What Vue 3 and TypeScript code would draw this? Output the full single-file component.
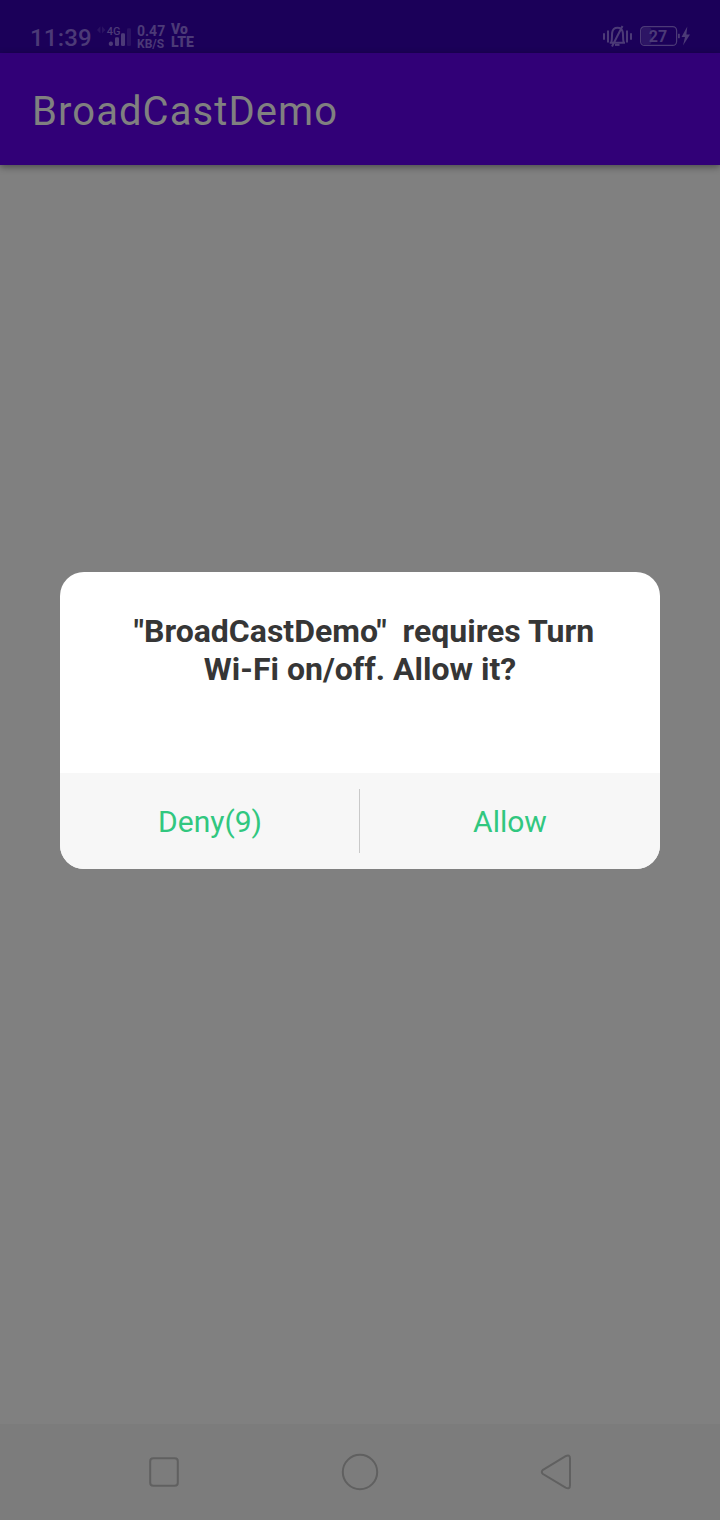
<script setup lang="ts">
const appName = 'BroadCastDemo'
const message = ` "${appName}"  requires Turn\nWi-Fi on/off. Allow it?`
const actions: string[] = ['Deny(9)', 'Allow']
</script>

<template>
  <div class="screen">
    <header class="status">
      <span class="clock">11:39</span>
      <svg class="signal" width="36" height="30" viewBox="0 0 36 30">
        <path d="M3.4 3.2 L0 6.9 L3.4 10.6Z M5 3.2 L8.4 6.9 L5 10.6Z" class="faint" />
        <text x="9.8" y="12" class="gen">4G</text>
        <rect x="11.9" y="18.4" width="4" height="4.6" rx="1.8" />
        <rect x="18" y="14.3" width="4" height="8.7" rx="1.2" />
        <rect x="24" y="10.2" width="4" height="12.8" rx="1.2" />
        <rect x="30" y="5.2" width="4" height="17.8" rx="1.2" class="faint" />
      </svg>
      <span class="speed"><span class="rate">0.47</span><span class="unit">KB/S</span></span>
      <span class="volte"><span class="vo">Vo</span><span>LTE</span></span>
      <svg class="tray" width="90" height="26" viewBox="0 0 90 26">
        <g class="line">
          <path d="M4 9.3V15.7 M8 6.5V18.5 M27 6.5V18.5 M31 9.3V15.7" />
          <path d="M9.7 18.8H25 M11.3 18.8C12.3 15.5 11.7 12 12.2 8.5C12.6 5.5 14.7 3.8 17.5 3.8C20.3 3.8 22.4 5.5 22.8 8.5C23.3 12 22.7 15.5 23.7 18.8 M22.5 2L12 22.5" />
          <path d="M15 20.9H19.5" />
        </g>
        <rect x="41.5" y="3.5" width="10" height="17" rx="3" class="charge" />
        <rect x="40.6" y="2.6" width="36" height="18.8" rx="4" class="case" />
        <text x="58" y="17.8" class="level">27</text>
        <rect x="78" y="9.8" width="1.8" height="4.4" />
        <path d="M87.3 2.5L81.5 13H85L83 21.5L90 10.5H86.4Z" />
      </svg>
    </header>
    <div class="appbar">{{ appName }}</div>
    <main class="content">
      <section class="dialog">
        <p class="message">{{ message }}</p>
        <div class="actions">
          <button v-for="label in actions" :key="label" class="action">{{ label }}</button>
        </div>
      </section>
    </main>
    <nav class="nav">
      <svg width="720" height="96" viewBox="0 0 720 96">
        <rect x="150.2" y="34.2" width="27.6" height="27.6" rx="3" />
        <circle cx="360" cy="48" r="17.2" />
        <path d="M543 45.8L565.6 32.1Q570 30 570 34.6V61.2Q570 65.8 565.6 63.7L543 50Q540.6 47.9 543 45.8Z" />
      </svg>
    </nav>
  </div>
</template>

<style>
body {
  margin: 0;
}
</style>

<style scoped>
.screen {
  display: flex;
  flex-direction: column;
  width: 720px;
  height: 1520px;
  overflow: hidden;
  background: #808080;
  font-family: Roboto, "Liberation Sans", sans-serif;
}
.status {
  display: flex;
  flex: none;
  align-items: flex-start;
  box-sizing: border-box;
  height: 53px;
  padding: 23px 30px 0;
  background: #1b0059;
  color: #4c3a77;
}
.status svg {
  fill: #4c3a77;
}
.clock {
  width: 67px;
  font-size: 24px;
  font-weight: 500;
  line-height: 30px;
  letter-spacing: 0.2px;
}
.status .faint {
  fill: #2b1263;
}
.gen {
  font-size: 11px;
  font-weight: 500;
}
.signal {
  flex: none;
}
.speed,
.volte {
  display: flex;
  flex-direction: column;
}
.speed {
  width: 34px;
  margin: 2px 0 0 4px;
  font-size: 12px;
  line-height: 12.5px;
  font-weight: 700;
}
.rate {
  font-size: 14px;
}
.volte {
  font-size: 14px;
  line-height: 12.5px;
  font-weight: 900;
}
.tray {
  margin: 1px 0 0 auto;
}
.line {
  fill: none;
  stroke: #4c3a77;
  stroke-width: 2;
}
.status .charge {
  fill: #2d1565;
}
.status .case {
  fill: none;
  stroke: #4c3a77;
  stroke-width: 1.2;
}
.level {
  font-size: 16px;
  font-weight: 700;
  text-anchor: middle;
}
.appbar {
  z-index: 1;
  flex: none;
  height: 112px;
  padding-left: 32px;
  background: #310077;
  box-shadow: 0 2px 7px rgba(0, 0, 0, 0.42);
  color: #808080;
  font-size: 40px;
  line-height: 118px;
  letter-spacing: 1.08px;
}
.content {
  flex: 1;
  padding: 407px 60px 0;
}
.dialog {
  display: flex;
  flex-direction: column;
  height: 297px;
  overflow: hidden;
  border-radius: 24px;
  background: #fff;
}
.message {
  flex: 1;
  margin: 0;
  padding-top: 40px;
  color: #363636;
  font-size: 32px;
  font-weight: 700;
  line-height: 38px;
  text-align: center;
  white-space: pre;
}
.actions {
  display: flex;
  height: 96px;
  padding: 16px 0;
  box-sizing: border-box;
  background: #f7f7f7;
}
.action {
  flex: none;
  box-sizing: border-box;
  width: 300px;
  padding: 2px 0 0;
  border: 0;
  background: none;
  color: #31c77f;
  font: 400 30px/62px Roboto, "Liberation Sans", sans-serif;
}
.action:first-child {
  padding-left: 1px;
  border-right: 1px solid #c9c9c9;
}
.nav {
  flex: none;
  height: 96px;
  background: #7c7c7c;
}
.nav svg {
  display: block;
  fill: none;
  stroke: #606060;
  stroke-width: 2;
}
</style>
